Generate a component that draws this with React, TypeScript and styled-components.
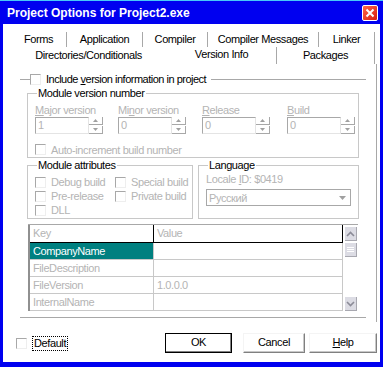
import React from 'react';
import styled, { createGlobalStyle } from 'styled-components';

const GlobalStyle = createGlobalStyle`
  html, body {
    margin: 0;
    padding: 0;
    background: #fff;
  }
  body {
    font-family: "Liberation Sans", Arial, sans-serif;
    font-size: 10px;
    letter-spacing: -0.15px;
  }
`;

const LINE = '#a8a8a8';
const LIGHT = '#c8c8c8';
const DIM = '#b4b4b4';

const Frame = styled.div`
  width: 383px;
  height: 367px;
  box-sizing: border-box;
  background: #0000f0;
  border-top: 1px solid #48c8f8;
  padding: 0 3px 5px 3px;
  display: flex;
  flex-direction: column;
`;

const TitleBar = styled.div`
  height: 23px;
  flex: 0 0 auto;
  display: flex;
  align-items: center;
  justify-content: space-between;
  padding: 0 2px 0 4px;
`;

const Title = styled.span`
  color: #fff;
  font-weight: bold;
  font-size: 12px;
  letter-spacing: 0;
`;

const CloseBtn = styled.div`
  width: 16px;
  height: 16px;
  box-sizing: border-box;
  border: 1px solid #fff;
  border-radius: 2px;
  background: linear-gradient(135deg, #ff6a4a, #d81a10);
  display: flex;
  align-items: center;
  justify-content: center;
`;

const Body = styled.div`
  flex: 1;
  background: #fff;
  display: flex;
  flex-direction: column;
`;

const TabRow = styled.div<{ $h: number }>`
  height: ${(p) => p.$h}px;
  display: flex;
  align-items: flex-end;
  padding-left: 8px;
`;

const Tab = styled.div<{ $w: number; $sep?: boolean; $h: number; $active?: boolean }>`
  width: ${(p) => p.$w}px;
  height: ${(p) => p.$h}px;
  box-sizing: border-box;
  line-height: ${(p) => p.$h - (p.$active ? 3 : 0)}px;
  font-size: 11px;
  letter-spacing: -0.4px;
  text-align: center;
  color: #000;
  white-space: nowrap;
  border-right: 1px solid ${(p) => (p.$sep ? LINE : 'transparent')};
`;

const Sheet = styled.div`
  height: 258px;
  box-sizing: border-box;
  margin-right: 3px;
  border-right: 1px solid ${LINE};
  padding: 9px 10px 4px 17px;
`;

const OuterGroup = styled.fieldset`
  margin: 0;
  min-width: 0;
  padding: 1px 7px 6px;
  border: none;
  border-top: 1px solid ${LINE};
  border-bottom: 1px solid ${LINE};
`;

const OuterLegend = styled.legend`
  margin-left: 3px;
  padding: 0 5px 0 0;
  display: flex;
  align-items: center;
  gap: 5px;
  line-height: 13px;
  font-size: 11px;
  letter-spacing: -0.5px;
  color: #000;
`;

const Group = styled.fieldset<{ $w?: number }>`
  margin: 0;
  min-width: 0;
  box-sizing: border-box;
  ${(p) => (p.$w ? `width: ${p.$w}px; flex: 0 0 auto;` : '')}
  border: 1px solid ${LIGHT};
`;

const Caption = styled.legend`
  margin-left: 2px;
  padding: 0 1px;
  line-height: 13px;
  font-size: 11px;
  letter-spacing: -0.4px;
  color: #000;
`;

const VersionGroup = styled(Group)`
  padding: 4px 7px 1px;
`;

const FieldGrid = styled.div`
  display: grid;
  grid-template-columns: 83px 84px 85px auto;
`;

const FieldLabel = styled.div`
  line-height: 13px;
  font-size: 11px;
  letter-spacing: -0.4px;
  color: ${DIM};
`;

const SpinRow = styled.div`
  display: flex;
  height: 17px;
`;

const Edit = styled.div<{ $w: number }>`
  width: ${(p) => p.$w}px;
  height: 17px;
  box-sizing: border-box;
  border-top: 1px solid ${LINE};
  border-left: 1px solid ${LINE};
  border-right: 1px solid #e4e4e4;
  border-bottom: 1px solid #e4e4e4;
  padding-left: 2px;
  line-height: 15px;
  font-size: 11px;
  color: ${DIM};
`;

const Spinner = styled.div`
  width: 14px;
  display: flex;
  flex-direction: column;
  justify-content: space-between;
`;

const SpinHalf = styled.div`
  height: 8px;
  box-sizing: border-box;
  border-right: 1px solid ${LINE};
  border-bottom: 1px solid ${LINE};
  display: flex;
  align-items: center;
  justify-content: center;
`;

const CheckRow = styled.div<{ $h?: number }>`
  display: flex;
  align-items: center;
  height: ${(p) => p.$h ?? 13}px;
  font-size: 11px;
  letter-spacing: -0.4px;
  color: ${DIM};
  white-space: nowrap;
`;

const Box = styled.span<{ $flush?: boolean }>`
  width: 11px;
  height: 11px;
  box-sizing: border-box;
  flex: 0 0 auto;
  border-top: 1px solid ${LINE};
  border-left: 1px solid ${LINE};
  border-right: 1px solid #eeeeee;
  border-bottom: 1px solid #eeeeee;
  margin-right: ${(p) => (p.$flush ? 0 : 5)}px;
`;

const AutoRow = styled.div`
  margin-top: 9px;
`;

const AttrRow = styled.div`
  display: flex;
  margin-top: 1px;
  gap: 5px;
`;

const AttrGroup = styled(Group)`
  padding: 3px 7px 1px;
`;

const AttrGrid = styled.div`
  display: grid;
  grid-template-columns: 80px auto;
  grid-auto-rows: 14px;
`;

const LangGroup = styled(Group)`
  padding: 1px 7px 1px;
`;

const LangText = styled.div`
  line-height: 13px;
  font-size: 11px;
  letter-spacing: -0.4px;
  color: ${DIM};
`;

const Combo = styled.div`
  margin-top: 3px;
  width: 145px;
  height: 17px;
  box-sizing: border-box;
  border: 1px solid ${LINE};
  display: flex;
  align-items: center;
  justify-content: space-between;
  padding-left: 2px;
  font-size: 11px;
  letter-spacing: -0.4px;
  color: ${DIM};
`;

const ComboBtn = styled.div`
  width: 13px;
  height: 13px;
  margin-right: 1px;
  display: flex;
  align-items: center;
  justify-content: center;
`;

const Grid = styled.div`
  margin: 5px 1px 0 1px;
  display: flex;
  border-top: 1px solid ${LINE};
`;

const Table = styled.div`
  flex: 1;
  border-left: 2px solid #909090;
`;

const Row = styled.div<{ $h: number }>`
  display: flex;
  height: ${(p) => p.$h}px;
`;

const Cell = styled.div<{ $w: number; $head?: boolean; $sel?: boolean }>`
  width: ${(p) => p.$w}px;
  box-sizing: border-box;
  border-right: 1px solid ${(p) => (p.$head ? '#000' : LIGHT)};
  border-bottom: 1px solid ${(p) => (p.$head ? '#000' : LIGHT)};
  padding-left: 3px;
  line-height: 16px;
  font-size: 11px;
  letter-spacing: -0.4px;
  color: ${(p) => (p.$sel ? '#fff' : DIM)};
  background: ${(p) => (p.$sel ? '#008080' : '#fff')};
  white-space: nowrap;
  overflow: hidden;
`;

const Scroll = styled.div`
  width: 16px;
  box-sizing: border-box;
  padding: 2px 1px 0 2px;
  display: flex;
  flex-direction: column;
  gap: 2px;
`;

const ScrollBtn = styled.div<{ $end?: boolean }>`
  height: 14px;
  box-sizing: border-box;
  background: #dcdce4;
  border-right: 1px solid #a8a8b0;
  border-bottom: 1px solid #a8a8b0;
  display: flex;
  align-items: center;
  justify-content: center;
  ${(p) => (p.$end ? 'margin-top: auto;' : '')}
`;

const Footer = styled.div`
  flex: 1;
  display: flex;
  align-items: flex-start;
  padding: 11px 3px 0 13px;
  font-size: 11px;
  letter-spacing: -0.4px;
`;

const DefaultCheck = styled.div`
  display: flex;
  align-items: center;
  height: 20px;
  color: #000;
`;

const FocusLabel = styled.span`
  border: 1px dotted #000;
  padding: 0 1px;
  line-height: 13px;
`;

const Buttons = styled.div`
  margin-left: auto;
  display: flex;
`;

const Button = styled.div<{ $w: number; $gap?: number; $default?: boolean }>`
  width: ${(p) => p.$w}px;
  height: 20px;
  margin-left: ${(p) => p.$gap ?? 0}px;
  box-sizing: border-box;
  border: 1px solid;
  border-color: ${(p) => (p.$default ? '#000' : '#f4f4f4 #808080 #808080 #f4f4f4')};
  box-shadow: ${(p) => (p.$default ? 'inset -1px -1px #808080' : 'inset -1px -1px #c8c8c8')};
  background: #fff;
  color: #000;
  text-align: center;
  line-height: 17px;
`;

const U = styled.span`
  text-decoration: underline;
`;

const UpTri = () => (
  <svg width="5" height="3" viewBox="0 0 5 3">
    <path d="M2.5 0 L5 3 L0 3 Z" fill="#a0a0a0" />
  </svg>
);

const DownTri = () => (
  <svg width="5" height="3" viewBox="0 0 5 3">
    <path d="M0 0 L5 0 L2.5 3 Z" fill="#a0a0a0" />
  </svg>
);

const SpinEdit = ({ value }: { value: string }) => (
  <SpinRow>
    <Edit $w={54}>{value}</Edit>
    <Spinner>
      <SpinHalf><UpTri /></SpinHalf>
      <SpinHalf><DownTri /></SpinHalf>
    </Spinner>
  </SpinRow>
);

const Check = ({ children, h }: { children: React.ReactNode; h?: number }) => (
  <CheckRow $h={h}>
    <Box />
    {children}
  </CheckRow>
);

const rows = [
  { key: 'CompanyName', value: '', sel: true },
  { key: 'FileDescription', value: '' },
  { key: 'FileVersion', value: '1.0.0.0' },
  { key: 'InternalName', value: '' },
];

const App: React.FC = () => {
  return (
    <>
      <GlobalStyle />
      <Frame>
        <TitleBar>
          <Title>Project Options for Project2.exe</Title>
          <CloseBtn>
            <svg width="10" height="10" viewBox="0 0 10 10">
              <path d="M1.5 1.5 L8.5 8.5 M8.5 1.5 L1.5 8.5" stroke="#fff" strokeWidth="2" />
            </svg>
          </CloseBtn>
        </TitleBar>
        <Body>
          <TabRow $h={23}>
            <Tab $w={56} $h={15} $sep>Forms</Tab>
            <Tab $w={76} $h={15} $sep>Application</Tab>
            <Tab $w={65} $h={15} $sep>Compiler</Tab>
            <Tab $w={111} $h={15} $sep>Compiler Messages</Tab>
            <Tab $w={56} $h={15} $sep>Linker</Tab>
          </TabRow>
          <TabRow $h={17}>
            <Tab $w={156} $h={17}>Directories/Conditionals</Tab>
            <Tab $w={110} $h={17} $sep $active>Version Info</Tab>
            <Tab $w={98} $h={17} $sep>Packages</Tab>
          </TabRow>
          <Sheet>
            <OuterGroup>
              <OuterLegend>
                <Box $flush />
                <span>
                  Include <U>v</U>ersion information in project
                </span>
              </OuterLegend>
              <VersionGroup>
                <Caption>Module version number</Caption>
                <FieldGrid>
                  <FieldLabel><U>M</U>ajor version</FieldLabel>
                  <FieldLabel>Mi<U>n</U>or version</FieldLabel>
                  <FieldLabel><U>R</U>elease</FieldLabel>
                  <FieldLabel><U>B</U>uild</FieldLabel>
                  <SpinEdit value="1" />
                  <SpinEdit value="0" />
                  <SpinEdit value="0" />
                  <SpinEdit value="0" />
                </FieldGrid>
                <AutoRow>
                  <Check>Auto-increment build number</Check>
                </AutoRow>
              </VersionGroup>
              <AttrRow>
                <AttrGroup $w={166}>
                  <Caption>Module attributes</Caption>
                  <AttrGrid>
                    <Check h={14}>Debug build</Check>
                    <Check h={14}>Special build</Check>
                    <Check h={14}>Pre-release</Check>
                    <Check h={14}>Private build</Check>
                    <Check h={14}>DLL</Check>
                  </AttrGrid>
                </AttrGroup>
                <LangGroup $w={161}>
                  <Caption>Language</Caption>
                  <LangText>Locale <U>I</U>D: $0419</LangText>
                  <Combo>
                    Русский
                    <ComboBtn>
                      <svg width="7" height="4" viewBox="0 0 7 4">
                        <path d="M0 0 L7 0 L3.5 4 Z" fill="#a0a0a0" />
                      </svg>
                    </ComboBtn>
                  </Combo>
                </LangGroup>
              </AttrRow>
              <Grid>
                <Table>
                  <Row $h={18}>
                    <Cell $w={124} $head>Key</Cell>
                    <Cell $w={189} $head>Value</Cell>
                  </Row>
                  {rows.map((r) => (
                    <Row $h={17} key={r.key}>
                      <Cell $w={124} $sel={r.sel}>{r.key}</Cell>
                      <Cell $w={189}>{r.value}</Cell>
                    </Row>
                  ))}
                </Table>
                <Scroll>
                  <ScrollBtn>
                    <svg width="9" height="6" viewBox="0 0 9 6">
                      <path d="M1 5 L4.5 1.5 L8 5" stroke="#8c8c98" strokeWidth="1.6" fill="none" />
                    </svg>
                  </ScrollBtn>
                  <ScrollBtn>
                    <svg width="7" height="7" viewBox="0 0 7 7">
                      <path d="M0 1.5 H7 M0 3.5 H7 M0 5.5 H7" stroke="#ffffff" strokeWidth="1" />
                    </svg>
                  </ScrollBtn>
                  <ScrollBtn $end>
                    <svg width="9" height="6" viewBox="0 0 9 6">
                      <path d="M1 1 L4.5 4.5 L8 1" stroke="#8c8c98" strokeWidth="1.6" fill="none" />
                    </svg>
                  </ScrollBtn>
                </Scroll>
              </Grid>
            </OuterGroup>
          </Sheet>
          <Footer>
            <DefaultCheck>
              <Box />
              <FocusLabel>Default</FocusLabel>
            </DefaultCheck>
            <Buttons>
              <Button $w={67} $default>OK</Button>
              <Button $w={62} $gap={11}>Cancel</Button>
              <Button $w={68} $gap={4}><U>H</U>elp</Button>
            </Buttons>
          </Footer>
        </Body>
      </Frame>
    </>
  );
};

export default App;
